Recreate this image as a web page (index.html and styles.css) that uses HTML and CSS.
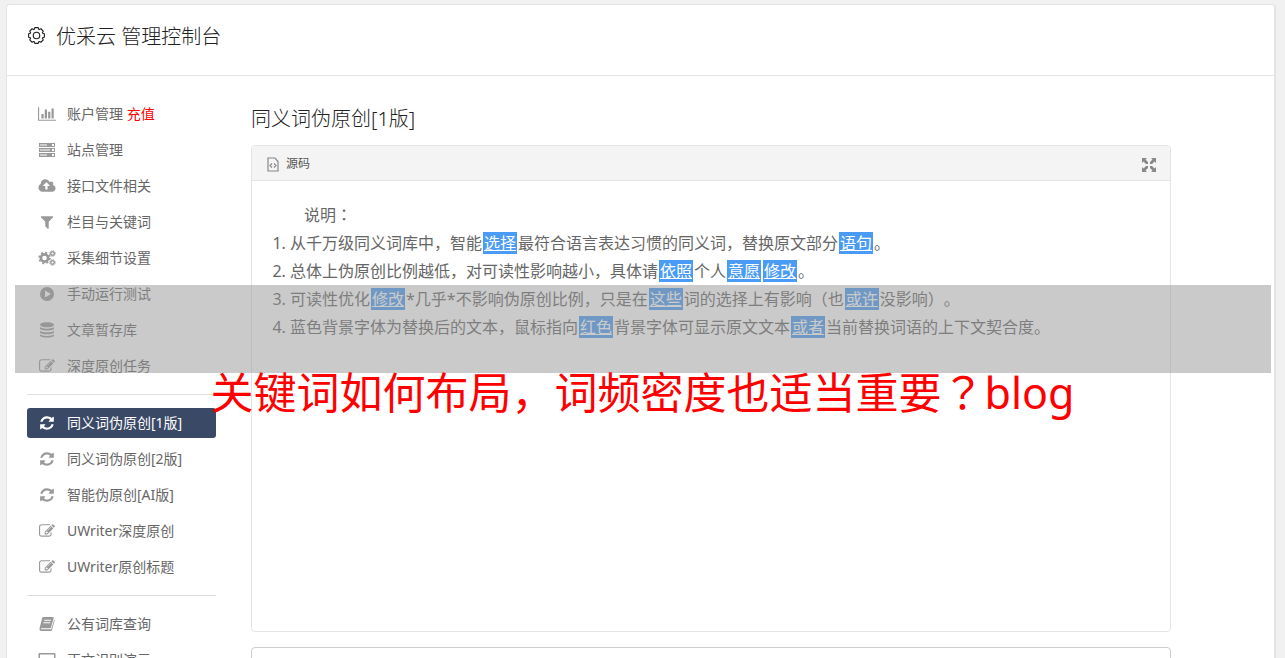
FILE: index.html
```
<!DOCTYPE html>
<html lang="zh-CN">
<head>
    <meta charset="UTF-8">
    <meta name="viewport" content="width=device-width, initial-scale=1.0">
    <title>优采云 管理控制台</title>
    <link rel="stylesheet" href="styles.css">
</head>
<body>
    <!-- 图标 -->
    <svg class="sprite" aria-hidden="true">
        <symbol id="i-chart" viewBox="0 0 2048 1792"><path d="M640 896v512h-256v-512h256zM1024 384v1024h-256v-1024h256zM2048 1536v128h-2048v-1536h128v1408h1920zM1408 640v768h-256v-768h256zM1792 256v1152h-256v-1152h256z"/></symbol>
        <symbol id="i-server" viewBox="0 0 18 16"><path fill-rule="evenodd" d="M1 1h16v4H1zM2 2.500v1h7v-1zM14 2v2h2v-2zM1 6h16v4H1zM2 7.500v1h10v-1zM14 7v2h2v-2zM1 11h16v4H1zM2 12.500v1h7v-1zM14 12v2h2v-2z"/></symbol>
        <symbol id="i-cloud" viewBox="-64 0 1920 1792"><path d="M1216 864q0-14-9-23l-352-352q-9-9-23-9t-23 9l-351 351q-10 12-10 24 0 14 9 23t23 9h224v352q0 13 9.500 22.500t22.500 9.500h192q13 0 22.500-9.500t9.500-22.500v-352h224q13 0 22.500-9.500t9.500-22.500zm640 288q0 159-112.500 271.500t-271.500 112.500h-1088q-185 0-316.500-131.500t-131.500-316.500q0-130 70-240t188-165q-2-30-2-43 0-212 150-362t362-150q156 0 285.500 87t188.500 231q71-62 166-62 106 0 181 75t75 181q0 76-41 138 130 31 213.500 135.500t83.500 238.500z"/></symbol>
        <symbol id="i-filter" viewBox="0 0 1792 1792"><path d="M1595 295q17 41-14 70l-493 493v742q0 42-39 59-13 5-25 5-27 0-45-19l-256-256q-19-19-19-45v-486l-493-493q-31-29-14-70 17-39 59-39h1280q42 0 59 39z"/></symbol>
        <symbol id="i-cogs" viewBox="0 0 18 16"><g fill="none" stroke="currentColor"><circle cx="6.500" cy="8" r="3.600" stroke-width="2.600"/><circle cx="6.500" cy="8" r="5.400" stroke-width="1.600" stroke-dasharray="2.120"/><circle cx="14.500" cy="3.500" r="1.800" stroke-width="1.400"/><circle cx="14.500" cy="3.500" r="2.800" stroke-width="1" stroke-dasharray="1.100"/><circle cx="14.500" cy="12.500" r="1.800" stroke-width="1.400"/><circle cx="14.500" cy="12.500" r="2.800" stroke-width="1" stroke-dasharray="1.100"/></g></symbol>
        <symbol id="i-play" viewBox="0 0 16 16"><path fill-rule="evenodd" d="M8 1a7 7 0 1 1 0 14A7 7 0 0 1 8 1zM6 4.500v7l6-3.500z"/></symbol>
        <symbol id="i-db" viewBox="0 0 16 16"><path d="M1 2.800C1 -.6 15 -.6 15 2.800S1 6.200 1 2.800zM1 5c2 2.200 12 2.200 14 0v1.500c0 2.800-14 2.800-14 0zM1 8.700c2 2.200 12 2.200 14 0v1.500c0 2.800-14 2.800-14 0zM1 12.300c2 2.200 12 2.200 14 0v1.200c0 2.800-14 2.800-14 0z"/></symbol>
        <symbol id="i-edit" viewBox="0 0 1792 1792"><path d="M888 1184l116-116-152-152-116 116v56h96v96h56zm440-720q-16-16-33 1l-350 350q-17 17-1 33t33-1l350-350q17-17 1-33zm80 594v190q0 119-84.500 203.500t-203.500 84.500h-832q-119 0-203.500-84.500t-84.500-203.500v-832q0-119 84.500-203.500t203.500-84.500h832q63 0 117 25 15 7 18 23 3 17-9 29l-49 49q-14 14-32 8-23-6-45-6h-832q-66 0-113 47t-47 113v832q0 66 47 113t113 47h832q66 0 113-47t47-113v-126q0-13 9-22l64-64q15-15 35-7t20 29zm-96-738l288 288-672 672h-288v-288zm444 132l-92 92-288-288 92-92q28-28 68-28t68 28l152 152q28 28 28 68t-28 68z"/></symbol>
        <symbol id="i-refresh" viewBox="0 0 1792 1792"><path d="M1639 1056q0 5-1 7-64 268-268 434.500t-478 166.500q-146 0-282.500-55t-243.500-157l-129 129q-19 19-45 19t-45-19-19-45v-448q0-26 19-45t45-19h448q26 0 45 19t19 45-19 45l-137 137q71 66 161 102t187 36q134 0 250-65t186-179q11-17 53-117 8-23 30-23h192q13 0 22.500 9.500t9.500 22.500zm25-800v448q0 26-19 45t-45 19h-448q-26 0-45-19t-19-45 19-45l138-138q-148-137-349-137-134 0-250 65t-186 179q-11 17-53 117-8 23-30 23h-199q-13 0-22.500-9.500t-9.500-22.500v-7q65-268 270-434.500t480-166.500q146 0 284 55.500t245 156.500l130-129q19-19 45-19t45 19 19 45z"/></symbol>
        <symbol id="i-book" viewBox="0 0 16 16"><path fill-rule="evenodd" d="M4.500 1H14q1 0 .700 1L12 11.500q-.3.800-1.200.800H2.500q-1 0-.5 1H11.500q.8 0 1-.7L15.200 3.500q.6.400.4 1L13 14q-.3 1-1.300 1H2.200Q.2 15 .5 12.500L3.200 2Q3.500 1 4.500 1zM5.300 3.800l-.3 1h6.800l.3-1zM4.600 6.300l-.3 1h6.800l.3-1z"/></symbol>
        <symbol id="i-screen" viewBox="0 0 18 16"><path fill-rule="evenodd" d="M1.500 1h15q1 0 1 1v9q0 1-1 1H11v2h2v1H5v-1h2v-2H1.500q-1 0-1-1V2q0-1 1-1zM2 2.500v8h14v-8z"/></symbol>
    </svg>

    <div class="page">
        <header class="header">
            <svg class="gear" viewBox="0 0 20 20" aria-hidden="true">
                <g fill="none" stroke="currentColor" stroke-width="1.200" stroke-linejoin="round">
                    <path d="M18.300 8.200v3.600l-1.800.550-.250.550.880 1.730-2.500 2.500-1.730-.880-.550.250-.550 1.800H8.200l-.550-1.800-.550-.250-1.730.880-2.500-2.500.880-1.730-.250-.550-1.800-.550V8.200l1.800-.550.250-.550-.880-1.730 2.500-2.500 1.730.880.550-.250.550-1.800h3.600l.550 1.800.550.250 1.730-.880 2.500 2.500-.880 1.730.250.550z"/>
                    <circle cx="10" cy="10" r="3.400"/>
                </g>
            </svg>
            <h1>优采云 管理控制台</h1>
        </header>

        <div class="content">
            <nav class="sidebar">
                <ul>
                    <li><a href="#"><svg><use href="#i-chart"/></svg>账户管理 <span class="pay">充值</span></a></li>
                    <li><a href="#"><svg><use href="#i-server"/></svg>站点管理</a></li>
                    <li><a href="#"><svg><use href="#i-cloud"/></svg>接口文件相关</a></li>
                    <li><a href="#"><svg><use href="#i-filter"/></svg>栏目与关键词</a></li>
                    <li><a href="#"><svg><use href="#i-cogs"/></svg>采集细节设置</a></li>
                    <li><a href="#"><svg><use href="#i-play"/></svg>手动运行测试</a></li>
                    <li><a href="#"><svg><use href="#i-db"/></svg>文章暂存库</a></li>
                    <li><a href="#"><svg><use href="#i-edit"/></svg>深度原创任务</a></li>
                </ul>
                <ul>
                    <li><a class="active" href="#"><svg><use href="#i-refresh"/></svg>同义词伪原创[1版]</a></li>
                    <li><a href="#"><svg><use href="#i-refresh"/></svg>同义词伪原创[2版]</a></li>
                    <li><a href="#"><svg><use href="#i-refresh"/></svg>智能伪原创[AI版]</a></li>
                    <li><a href="#"><svg><use href="#i-edit"/></svg>UWriter深度原创</a></li>
                    <li><a href="#"><svg><use href="#i-edit"/></svg>UWriter原创标题</a></li>
                </ul>
                <ul>
                    <li><a href="#"><svg><use href="#i-book"/></svg>公有词库查询</a></li>
                    <li><a href="#"><svg><use href="#i-screen"/></svg>正文识别演示</a></li>
                </ul>
            </nav>

            <main class="main">
                <h2>同义词伪原创[1版]</h2>
                <div class="editor">
                    <div class="toolbar">
                        <button class="source" type="button">
                            <svg viewBox="0 0 12 15" aria-hidden="true"><path fill="none" stroke="currentColor" stroke-width="1.200" d="M1 1h7L11 4.500V14H1zM5 6.500L3 8.500l2 2M7 6.500l2 2-2 2"/></svg>源码
                        </button>
                        <button class="expand" type="button" aria-label="全屏">
                            <svg viewBox="0 0 14 14" aria-hidden="true"><path d="M0 0h5L3.500 1.500 6 4v2H4L1.500 3.500 0 5zM14 0v5l-1.500-1.500L10 6H8V4l2.500-2.500L9 0zM0 14V9l1.500 1.500L4 8h2v2l-2.500 2.500L5 14zM14 14H9l1.500-1.500L8 10V8h2l2.500 2.500L14 9z"/></svg>
                        </button>
                    </div>
                    <div class="text">
                        <p>说明<span class="mid" lang="ja">：</span></p>
                        <ol>
                            <li>从千万级同义词库中，智能<mark>选择</mark>最符合语言表达习惯的同义词，替换原文部分<mark>语句</mark>。</li>
                            <li>总体上伪原创比例越低，对可读性影响越小，具体请<mark>依照</mark>个人<mark>意愿</mark><mark>修改</mark>。</li>
                            <li>可读性优化<mark>修改</mark>*几乎*不影响伪原创比例，只是在<mark>这些</mark>词的选择上有影响（也<mark>或许</mark>没影响）。</li>
                            <li>蓝色背景字体为替换后的文本，鼠标指向<mark>红色</mark>背景字体可显示原文文本<mark>或者</mark>当前替换词语的上下文契合度。</li>
                        </ol>
                    </div>
                </div>
                <textarea class="result" aria-label="结果"></textarea>
            </main>
        </div>
    </div>

    <div class="band"></div>
    <div class="caption">关键词如何布局，词频密度也适当重要<span class="mid" lang="ja">？</span>blog</div>
</body>
</html>
```

FILE: styles.css
```
* {
    box-sizing: border-box;
}
body {
    margin: 0;
    height: 100vh;
    overflow: hidden;
    position: relative;
    background: #f1f1f1;
    color: #666;
    font-family: "Noto Sans", "Noto Sans CJK SC", sans-serif;
    font-size: 14px;
    text-spacing-trim: space-all;
}
h1, h2, p, ul, ol {
    margin: 0;
    padding: 0;
    font-weight: 400;
}
svg {
    fill: currentColor;
}
.sprite {
    display: none;
}
.page {
    margin: 4px 9px 0 6px;
    background: #fff;
    border: 1px solid #e4e4e4;
    border-right-width: 2px;
    border-radius: 4px;
}
.header {
    display: flex;
    align-items: center;
    height: 71px;
    padding: 0 20px 6px;
    border-bottom: 1px solid #e4e4e4;
    color: #222;
}
.header h1 {
    font-size: 20px;
    font-weight: 300;
    line-height: 28px;
}
.gear {
    width: 19px;
    height: 19px;
    margin: 0 10px 4px 0;
}
.content {
    display: flex;
    gap: 35px;
    padding: 23px 103px 20px 20px;
}

/* 左侧菜单 */
.sidebar {
    flex: 0 0 189px;
}
.sidebar ul {
    display: flex;
    flex-direction: column;
    gap: 6px;
    list-style: none;
}
.sidebar ul + ul {
    margin-top: 13px;
    padding-top: 13px;
    border-top: 1px solid #ddd;
}
.sidebar a {
    display: flex;
    align-items: center;
    height: 30px;
    padding-left: 11px;
    border-radius: 3px;
    color: #666;
    line-height: 20px;
    text-decoration: none;
    white-space: pre;
}
.sidebar svg {
    width: 18px;
    height: 16px;
    margin-right: 11px;
    color: #999;
}
.sidebar a.active,
.sidebar .active svg {
    color: #fff;
}
.sidebar a.active {
    background: #3a4a66;
}
.pay {
    color: #f00;
}

.main {
    flex: 1;
    min-width: 0;
}
.main h2 {
    color: #222;
    font-size: 20px;
    font-weight: 300;
    line-height: 28px;
    margin: 6px 0 12px;
}
.editor {
    border: 1px solid #e4e4e4;
    border-radius: 4px;
    overflow: hidden;
}
.toolbar {
    display: flex;
    align-items: center;
    justify-content: space-between;
    height: 35px;
    padding: 0 14px 0 15px;
    background: #f4f4f4;
    border-bottom: 1px solid #e4e4e4;
}
.toolbar button {
    display: flex;
    align-items: center;
    padding: 0;
    border: 0;
    background: none;
    color: #555;
    font: inherit;
    font-size: 12px;
    cursor: pointer;
}
.toolbar svg {
    color: #888;
}
.source svg {
    width: 12px;
    height: 15px;
    margin: 3px 7px 0 0;
}
.expand svg {
    width: 14px;
    height: 14px;
    margin-top: 3px;
}
.text {
    min-height: 450px;
    padding: 20px;
    font-size: 16px;
    line-height: 28px;
}
.text p {
    text-indent: 2em;
}
.text ol {
    padding-left: 18px;
}
.text mark {
    margin: 0 1px;
    padding: 0 1px;
    background: #4a9bf5;
    color: #fff;
    text-decoration: underline;
}
/* 冒号和问号居中显示 */
.mid {
    font-family: "Noto Sans CJK JP", sans-serif;
    line-height: 1;
}
.result {
    display: block;
    width: 100%;
    height: 200px;
    margin-top: 15px;
    border: 1px solid #ccc;
    border-radius: 4px;
    resize: none;
}

/* 灰色遮罩和红色标题 */
.band {
    position: absolute;
    top: 285px;
    left: 15px;
    right: 14px;
    height: 88px;
    background: rgba(150, 150, 150, 0.5);
}
.caption {
    position: absolute;
    top: 363px;
    left: 0;
    right: 0;
    color: #f00;
    font-size: 43px;
    line-height: 60px;
    text-align: center;
    white-space: nowrap;
}
```
